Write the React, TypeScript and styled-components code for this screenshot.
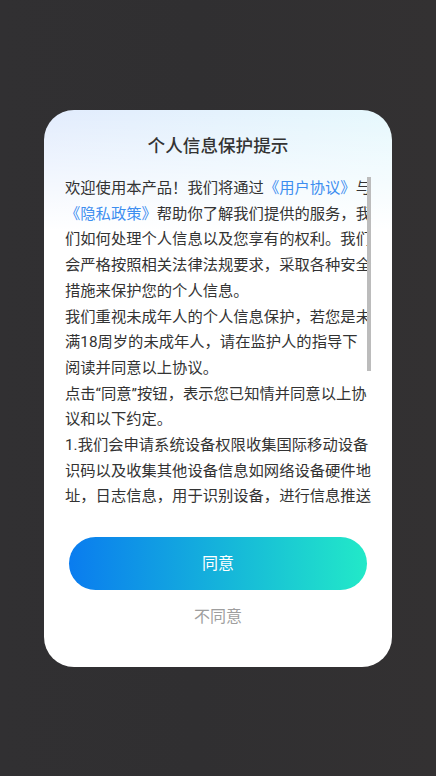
import React from "react";
import styled, { createGlobalStyle } from "styled-components";

const GlobalStyle = createGlobalStyle`
  html, body {
    margin: 0;
    padding: 0;
    background: #323133;
  }
  body {
    font-family: Roboto, "Noto Sans CJK SC", sans-serif;
  }
`;

const Screen = styled.div`
  width: 436px;
  height: 776px;
  box-sizing: border-box;
  padding-top: 110px;
  display: flex;
  justify-content: center;
  align-items: flex-start;
  background: linear-gradient(90deg, #313032 0%, #302f31 45%, #333132 100%);
`;

const Dialog = styled.div`
  width: 348px;
  height: 557px;
  box-sizing: border-box;
  border-radius: 30px;
  background: linear-gradient(
      180deg,
      rgba(255, 255, 255, 0) 0%,
      #ffffff 120px
    ),
    linear-gradient(90deg, #e2ecfd 0%, #e6f8fd 100%);
  display: flex;
  flex-direction: column;
  align-items: center;
  padding: 24px 0 0;
`;

const Title = styled.h1`
  margin: 0;
  font-size: 17.6px;
  line-height: 24px;
  font-weight: 500;
  color: #333333;
`;

const ScrollWrap = styled.div`
  position: relative;
  width: 307px;
  height: 334px;
  margin: 18px 0 0 1px;
`;

const Scroller = styled.div`
  width: 100%;
  height: 100%;
  overflow: hidden;
`;

const Thumb = styled.div`
  position: absolute;
  right: 1px;
  top: 1px;
  width: 4px;
  height: 194px;
  background: #bcbcbc;
`;

const Body = styled.div`
  font-size: 15.3px;
  line-height: 25.7px;
  color: #333333;
  line-break: strict;
`;

const Para = styled.p`
  margin: 0;
`;

const Link = styled.span`
  color: #3d8ef0;
`;

const AgreeButton = styled.button`
  margin-top: 27px;
  width: 298px;
  height: 53px;
  border: none;
  border-radius: 27px;
  background: linear-gradient(90deg, #0a7cef 0%, #16b8d9 55%, #22e9c8 100%);
  color: #ffffff;
  font-family: inherit;
  font-size: 16px;
  line-height: 22px;
  padding: 0;
  cursor: pointer;
`;

const DeclineButton = styled.button`
  margin-top: 16px;
  border: none;
  background: none;
  padding: 0;
  color: #9e9e9e;
  font-family: inherit;
  font-size: 16px;
  line-height: 22px;
  cursor: pointer;
`;

export default function App() {
  return (
    <>
      <GlobalStyle />
      <Screen>
        <Dialog>
          <Title>个人信息保护提示</Title>
          <ScrollWrap>
            <Scroller>
              <Body>
                <Para>
                  欢迎使用本产品！我们将通过<Link>《用户协议》</Link>与
                  <Link>《隐私政策》</Link>
                  帮助你了解我们提供的服务，我们如何处理个人信息以及您享有的权利。我们会严格按照相关法律法规要求，采取各种安全措施来保护您的个人信息。
                </Para>
                <Para>
                  我们重视未成年人的个人信息保护，若您是未满18周岁的未成年人，请在监护人的指导下阅读并同意以上协议。
                </Para>
                <Para>
                  点击“同意”按钮，表示您已知情并同意以上协议和以下约定。
                </Para>
                <Para>
                  1.我们会申请系统设备权限收集国际移动设备识码以及收集其他设备信息如网络设备硬件地址，日志信息，用于识别设备，进行信息推送和安全风控，并申请存储权限，用于下载及缓存相关文件。
                </Para>
                <Para>
                  2.上述权限以及摄像头、麦克风、相册、位置等敏感权限均不会默认或强制开启收集信息。
                </Para>
                <Para>
                  3.未经您同意，我们不会从第三方获取、共享或对外提供您的信息。
                </Para>
              </Body>
            </Scroller>
            <Thumb />
          </ScrollWrap>
          <AgreeButton>同意</AgreeButton>
          <DeclineButton>不同意</DeclineButton>
        </Dialog>
      </Screen>
    </>
  );
}
